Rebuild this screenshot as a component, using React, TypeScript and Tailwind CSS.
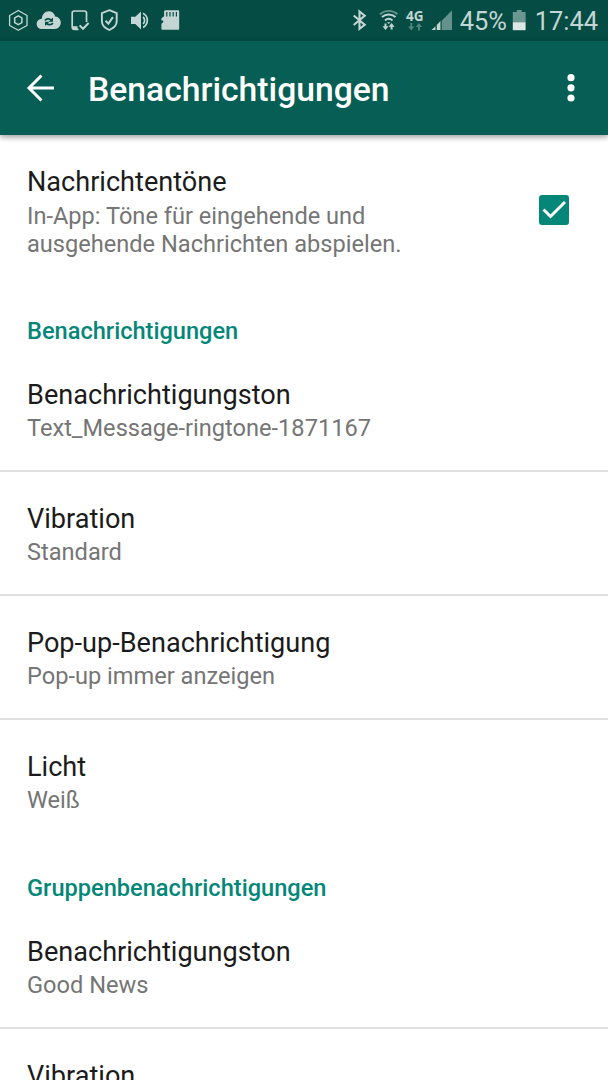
import { ReactNode } from 'react';

type Setting = {
  title: string;
  summary: string;
};

const messageSettings: Setting[] = [
  { title: 'Benachrichtigungston', summary: 'Text_Message-ringtone-1871167' },
  { title: 'Vibration', summary: 'Standard' },
  { title: 'Pop-up-Benachrichtigung', summary: 'Pop-up immer anzeigen' },
  { title: 'Licht', summary: 'Weiß' },
];

const groupSettings: Setting[] = [
  { title: 'Benachrichtigungston', summary: 'Good News' },
  { title: 'Vibration', summary: 'Standard' },
];

function StatusBar() {
  return (
    <div className="flex h-[41px] shrink-0 items-center justify-between bg-[#054d44] pl-[8px] pr-[10px] text-[#c3d6d3]">
      <div className="flex items-center">
        {/* Hexagon */}
        <svg width="20" height="41" viewBox="8 0 20 41" fill="none" stroke="currentColor" strokeWidth="1.3">
          <path d="M18.3 10.5l8.7 5v10l-8.7 4.7-8.7-4.7v-10z" strokeLinejoin="round" />
          <path d="M18.3 15.8l3.600 2v4.800l-3.600 2-3.600-2v-4.800z" strokeWidth="1.5" strokeLinejoin="round" />
        </svg>
        {/* Cloud sync */}
        <svg className="ml-2" width="26" height="41" viewBox="36 0 26 41">
          <path
            d="M42 29c-3 0-5.3-2.2-5.3-5.1 0-2.8 2.2-5 5.2-5.1.1-4.4 3-7.6 6.9-7.6 3.3 0 5.6 2 6.4 5.2 3.2.2 5.600 2.9 5.6 6.2 0 3.6-2.5 6.4-5.9 6.4z"
            fill="currentColor"
          />
          <path d="M45 20.5c1.3-2 4.7-2.2 6.4-.4M52.900 23c-1.3 2-4.7 2.2-6.4.4" fill="none" stroke="#054d44" strokeWidth="1.7" />
          <path d="M53 17.5v4.3h-4.4zM45 26v-4.3h4.4z" fill="#054d44" />
        </svg>
        {/* Device check */}
        <svg className="ml-2" width="20" height="41" viewBox="70 0 20 41" fill="none" stroke="currentColor">
          <path d="M86.5 22V13q0-2-2-2h-10q-2.3 0-2.3 2v14q0 2.3 2.3 2.3h4" strokeWidth="1.7" />
          <path d="M72 27.7h5.500" strokeWidth="3" />
          <path d="M79.6 25.4l3.4 3.4 5.6-5.8" strokeWidth="2" />
        </svg>
        {/* Shield */}
        <svg className="ml-2.5" width="18" height="41" viewBox="100 0 18 41" fill="none" stroke="currentColor">
          <path d="M109.3 10.2l7.4 3v8.3c0 4-3.2 6.6-7.4 8.5-4.2-1.9-7.4-4.5-7.4-8.5v-8.3z" strokeWidth="1.9" />
          <path d="M105.6 20.7l2.8 2.9 4.5-6.4" strokeWidth="2" />
        </svg>
        {/* Volume */}
        <svg className="ml-3" width="20" height="41" viewBox="130 0 20 41">
          <path d="M131 16.8h4.3l5.7-5.4v18l-5.7-5.4H131z" fill="currentColor" />
          <path d="M143 17a4.4 4.4 0 0 1 0 6.8M143 13.2a8 8 0 0 1 0 14.2" fill="none" stroke="currentColor" strokeWidth="1.7" />
        </svg>
        {/* SD card */}
        <svg className="ml-2.5" width="20" height="41" viewBox="160 0 20 41">
          <path d="M166 10.3h12.2q1 0 1 1v17.5q0 1-1 1h-15.8q-1 0-1-1v-5l1.8-1.5v-1.8h-1.8v-2.2l2.7-2v-5q0-1 1.9-1z" fill="currentColor" />
          <path d="M166.8 12v4.5M170 12v4.5M173.2 12v4.5M176.4 12v4.5" stroke="#054d44" strokeWidth="1.2" />
        </svg>
      </div>

      <div className="flex items-center">
        {/* Bluetooth */}
        <svg width="15" height="41" viewBox="352 0 15 41" fill="none" stroke="currentColor" strokeWidth="2.1">
          <path d="M353.7 15.5l11 9.3-5.2 4V11.5l5.2 4.2-11 9.3" />
        </svg>
        {/* Wifi */}
        <svg className="ml-[11px]" width="22" height="41" viewBox="378 0 22 41" fill="none" stroke="currentColor">
          <path d="M380 14.200c5-4.5 12.5-4.5 17.5 0" strokeWidth="1.9" opacity=".5" />
          <path d="M382 17c4-3.5 9.5-3.5 13.5 0M385 20.4c2.4-2 5.1-2 7.5 0" strokeWidth="2" />
          <path d="M387 22.2h3.5l-1.75 1.8z" fill="currentColor" stroke="none" />
          <path d="M385.500 23.5v4M391.600 29.5v-4" strokeWidth="2" />
          <path d="M382.500 26.3h6l-3 3.700zM388.600 26.7h6l-3-3.700z" fill="currentColor" stroke="none" />
        </svg>
        <div className="ml-[6px] flex h-[41px] w-[18px] flex-col items-center pt-[10px]">
          <span className="font-['Noto_Sans',sans-serif] text-[13.5px] leading-[12px] font-bold">4G</span>
          <svg className="mt-[1px] opacity-40" width="16" height="8" viewBox="0 0 16 8" fill="currentColor">
            <path d="M3.3 0h1.9v3.500h2.2L4.25 7.500 1.1 3.500h2.2zM11 7.500h1.900V4h2.2L11.95 0 8.8 4H11z" />
          </svg>
        </div>
        {/* Signal */}
        <svg className="ml-[7px]" width="22" height="41" viewBox="431 0 22 41" fill="currentColor">
          <path d="M442 20.5l10-10.3V30h-10z" opacity=".5" />
          <path d="M431.5 30l4-3.8V30zM436.8 25l3.5-3.7V30h-3.5z" />
          <path d="M440.3 21.3l1.2-1.2V30h-1.2z" opacity=".3" />
        </svg>
        <span className="ml-[7px] w-[48px] pt-px text-[25.4px] leading-[41px] whitespace-nowrap">45%</span>
        {/* Battery */}
        <svg className="ml-[4px]" width="14" height="41" viewBox="512 0 14 41">
          <path d="M512.8 12h4v-2h4.8v2h4v10.2h-12.8z" fill="#6b9790" />
          <path d="M512.8 22.2h12.8v8h-12.8z" fill="#dce7e5" />
        </svg>
        <span className="ml-[9px] pt-px text-[25.4px] leading-[41px] whitespace-nowrap">17:44</span>
      </div>
    </div>
  );
}

function Toolbar() {
  return (
    <header className="z-10 flex h-[94px] shrink-0 items-center bg-[#075e54] pr-[31px] pl-[26px] text-white shadow-[0_2px_6px_rgba(0,0,0,0.4)]">
      <button aria-label="Zurück">
        <svg width="30" height="30" viewBox="0 0 30 30" fill="none" stroke="currentColor" strokeWidth="3">
          <path d="M28 15H4M15.5 2.500L3 15l12.500 12.500" />
        </svg>
      </button>
      <h1 className="ml-8 flex-1 pt-[3px] text-[33.7px] leading-[40px] font-medium">Benachrichtigungen</h1>
      <button aria-label="Mehr">
        <svg width="12" height="30" viewBox="0 0 12 30" fill="currentColor">
          <circle cx="6" cy="4.7" r="3.6" />
          <circle cx="6" cy="14.8" r="3.6" />
          <circle cx="6" cy="25" r="3.6" />
        </svg>
      </button>
    </header>
  );
}

function SettingText({ title, children }: { title: string; children: ReactNode }) {
  return (
    <div>
      <div className="text-[27.1px] leading-8 text-[#1b1b1b]">{title}</div>
      <div className="mt-[3px] text-[23.6px] leading-7 text-[#757575]">{children}</div>
    </div>
  );
}

function SettingSection({ heading, settings }: { heading: string; settings: Setting[] }) {
  return (
    <section>
      <h2 className="px-[27px] pt-8 pb-[3px] text-[23.6px] leading-7 font-medium text-[#048778]">{heading}</h2>
      {settings.map((setting) => (
        <div key={setting.title} className="border-b-2 border-[#e0e0e0] px-[27px] pt-[31px] pb-7 last:border-b-0">
          <SettingText title={setting.title}>{setting.summary}</SettingText>
        </div>
      ))}
    </section>
  );
}

export default function App() {
  return (
    <div className="flex h-[1080px] w-[608px] flex-col overflow-hidden bg-white font-['Roboto',sans-serif]">
      <StatusBar />
      <Toolbar />
      <main className="min-h-0 flex-1 overflow-hidden">
        <div className="flex items-center justify-between pt-[31px] pr-[39px] pb-[27px] pl-[27px]">
          <SettingText title="Nachrichtentöne">
            <p className="pt-px">
              In-App: Töne für eingehende und
              <br />
              ausgehende Nachrichten abspielen.
            </p>
          </SettingText>
          <svg className="mb-1" width="30" height="30" viewBox="0 0 30 30" role="checkbox" aria-checked="true">
            <rect width="30" height="30" rx="3" fill="#048778" />
            <path d="M4.5 14.5l7 7L26 7" fill="none" stroke="#fff" strokeWidth="3" />
          </svg>
        </div>
        <SettingSection heading="Benachrichtigungen" settings={messageSettings} />
        <SettingSection heading="Gruppenbenachrichtigungen" settings={groupSettings} />
      </main>
    </div>
  );
}
